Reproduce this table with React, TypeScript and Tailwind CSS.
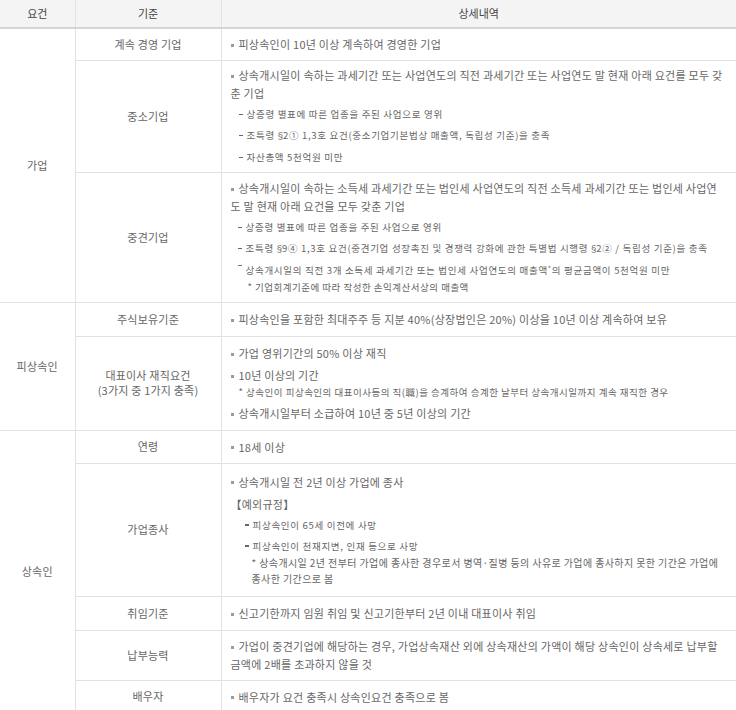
import React from "react";

function Dot() {
  return <span className="inline-block w-[3px] h-[3px] bg-[#9a9a9a] align-middle mr-[5px] relative top-[-1px]" />;
}

function Dash({ raised }: { raised?: boolean }) {
  return raised ? (
    <span className="inline-block w-[4px] h-[1.2px] bg-[#777] align-top mt-[4px] mr-[4px]" />
  ) : (
    <span className="inline-block w-[4px] h-[1.5px] bg-[#666] align-middle mr-[4px] relative top-[-1px]" />
  );
}

function Sec() {
  return <span className="font-['Liberation_Sans',sans-serif] tracking-normal">§</span>;
}

function Main({ children, first }: { children: React.ReactNode; first?: boolean }) {
  return (
    <div className={`text-[11px] tracking-[0.25px] leading-[18px] whitespace-nowrap ${first ? "" : "mt-[4px]"}`}>
      <Dot />
      {children}
    </div>
  );
}

function Sub({ children, indent, raised }: { children: React.ReactNode; indent: string; raised?: boolean }) {
  return (
    <div className={`text-[9.5px] tracking-[0.7px] leading-[18px] mt-[3px] whitespace-nowrap ${indent}`}>
      <Dash raised={raised} />
      {children}
    </div>
  );
}

function Note({ children, indent }: { children: React.ReactNode; indent: string }) {
  return (
    <div className={`text-[9.5px] tracking-[0.5px] leading-[16px] whitespace-nowrap ${indent}`}>{children}</div>
  );
}

const c1 = "border-b border-r border-[#e1e1e1] text-center align-middle text-[11px] tracking-[0.2px] p-0";
const c2 = "border-b border-r border-[#e1e1e1] text-center align-middle text-[11px] tracking-[0.2px] p-0";
const c3 = "border-b border-[#e1e1e1] text-left align-middle pl-[9px] pr-[2px] py-0";

export default function App() {
  return (
    <div className="w-[736px] bg-white font-['Noto_Sans_CJK_KR','Noto_Sans',sans-serif] text-[#666]">
      <table className="w-full border-collapse table-fixed">
        <colgroup>
          <col className="w-[75px]" />
          <col className="w-[146px]" />
          <col />
        </colgroup>
        <thead>
          <tr className="h-[28px] bg-[#f4f4f4]">
            <th className="border-b-2 border-b-[#d6d6d6] border-r border-r-[#e3e3e3] font-normal text-[11px] text-[#444] p-0">요건</th>
            <th className="border-b-2 border-b-[#d6d6d6] border-r border-r-[#e3e3e3] font-normal text-[11px] text-[#444] p-0">기준</th>
            <th className="border-b-2 border-b-[#d6d6d6] font-normal text-[11px] text-[#444] p-0">상세내역</th>
          </tr>
        </thead>
        <tbody>
          <tr className="h-[32px]">
            <td rowSpan={3} className={c1}>가업</td>
            <td className={c2}>계속 경영 기업</td>
            <td className={c3}>
              <Main first>피상속인이 10년 이상 계속하여 경영한 기업</Main>
            </td>
          </tr>
          <tr className="h-[112px]">
            <td className={c2}>중소기업</td>
            <td className={c3}>
              <div className="text-[11px] tracking-[0.25px] leading-[18px] whitespace-nowrap">
                <Dot />
                상속개시일이 속하는 과세기간 또는 사업연도의 직전 과세기간 또는 사업연도 말 현재 아래 요건를 모두 갖
                <br />춘 기업
              </div>
              <Sub indent="pl-[8px]">상증령 별표에 따른 업종을 주된 사업으로 영위</Sub>
              <Sub indent="pl-[8px]">
                조특령 <Sec />2① 1,3호 요건(중소기업기본법상 매출액, 독립성 기준)을 충족
              </Sub>
              <Sub indent="pl-[8px]">자산총액 5천억원 미만</Sub>
            </td>
          </tr>
          <tr className="h-[130px]">
            <td className={c2}>중견기업</td>
            <td className={c3}>
              <div className="text-[11px] tracking-[0.25px] leading-[18px] whitespace-nowrap">
                <Dot />
                상속개시일이 속하는 소득세 과세기간 또는 법인세 사업연도의 직전 소득세 과세기간 또는 법인세 사업연
                <br />도 말 현재 아래 요건을 모두 갖춘 기업
              </div>
              <Sub indent="pl-[7px]">상증령 별표에 따른 업종을 주된 사업으로 영위</Sub>
              <Sub indent="pl-[7px]">
                조특령 <Sec />9④ 1,3호 요건(중견기업 성장촉진 및 경쟁력 강화에 관한 특별법 시행령 <Sec />2② / 독립성 기준)을 충족
              </Sub>
              <Sub indent="pl-[7px]" raised>
                상속개시일의 직전 3개 소득세 과세기간 또는 법인세 사업연도의 매출액
                <sup className="text-[7px]">*</sup>의 평균금액이 5천억원 미만
              </Sub>
              <Note indent="pl-[17px]">* 기업회계기준에 따라 작성한 손익계산서상의 매출액</Note>
            </td>
          </tr>
          <tr className="h-[34px]">
            <td rowSpan={2} className={c1}>피상속인</td>
            <td className={c2}>주식보유기준</td>
            <td className={c3}>
              <Main first>피상속인을 포함한 최대주주 등 지분 40%(상장법인은 20%) 이상을 10년 이상 계속하여 보유</Main>
            </td>
          </tr>
          <tr className="h-[94px]">
            <td className={c2}>
              <div className="leading-[15px]">
                대표이사 재직요건
                <br />
                (3가지 중 1가지 충족)
              </div>
            </td>
            <td className={c3}>
              <Main first>가업 영위기간의 50% 이상 재직</Main>
              <Main>10년 이상의 기간</Main>
              <Note indent="pl-[8px]">
                * 상속인이 피상속인의 대표이사등의 직(職)을 승계하여 승계한 날부터 상속개시일까지 계속 재직한 경우
              </Note>
              <Main>상속개시일부터 소급하여 10년 중 5년 이상의 기간</Main>
            </td>
          </tr>
          <tr className="h-[33px]">
            <td rowSpan={6} className={c1}>상속인</td>
            <td className={c2}>연령</td>
            <td className={c3}>
              <Main first>18세 이상</Main>
            </td>
          </tr>
          <tr className="h-[133px]">
            <td className={c2}>가업종사</td>
            <td className={c3}>
              <Main first>상속개시일 전 2년 이상 가업에 종사</Main>
              <div className="text-[11px] tracking-[0.25px] leading-[18px] mt-[4px] whitespace-nowrap">【예외규정】</div>
              <Sub indent="pl-[14px]">피상속인이 65세 이전에 사망</Sub>
              <Sub indent="pl-[14px]">피상속인이 천재지변, 인재 등으로 사망</Sub>
              <div className="text-[10px] tracking-[0.4px] leading-[16px] whitespace-nowrap pl-[21px]">
                * 상속개시일 2년 전부터 가업에 종사한 경우로서 병역·질병 등의 사유로 가업에 종사하지 못한 기간은 가업에
                <br />
                종사한 기간으로 봄
              </div>
            </td>
          </tr>
          <tr className="h-[34px]">
            <td className={c2}>취임기준</td>
            <td className={c3}>
              <Main first>신고기한까지 임원 취임 및 신고기한부터 2년 이내 대표이사 취임</Main>
            </td>
          </tr>
          <tr className="h-[50px]">
            <td className={c2}>납부능력</td>
            <td className={c3}>
              <div className="text-[11px] tracking-[0.25px] leading-[18px] whitespace-nowrap">
                <Dot />
                가업이 중견기업에 해당하는 경우, 가업상속재산 외에 상속재산의 가액이 해당 상속인이 상속세로 납부할
                <br />
                금액에 2배를 초과하지 않을 것
              </div>
            </td>
          </tr>
          <tr className="h-[33px]">
            <td className={c2}>배우자</td>
            <td className={c3}>
              <Main first>배우자가 요건 충족시 상속인요건 충족으로 봄</Main>
            </td>
          </tr>
        </tbody>
      </table>
    </div>
  );
}
